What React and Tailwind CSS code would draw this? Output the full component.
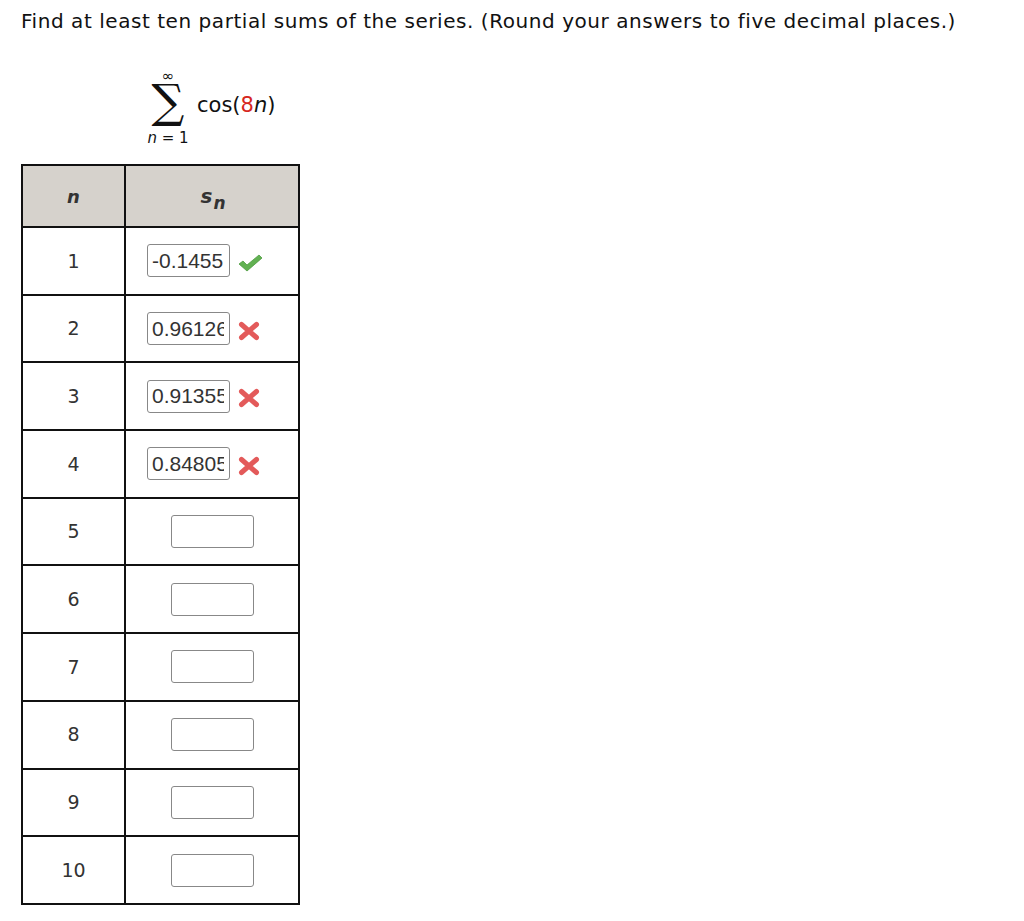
import React from "react";

const rows = [
  { n: 1, v: "-0.1455", s: "ok" },
  { n: 2, v: "0.96126", s: "bad" },
  { n: 3, v: "0.91355", s: "bad" },
  { n: 4, v: "0.84805", s: "bad" },
  { n: 5 },
  { n: 6 },
  { n: 7 },
  { n: 8 },
  { n: 9 },
  { n: 10 },
];

function Check() {
  return (
    <svg width="26" height="20" viewBox="0 0 26 20">
      <path d="M2 11 L6 8 L10 12 L22 2 L25 5 L10 18 Z" fill="#62b152" stroke="#4e9c40" strokeWidth="0.8" strokeLinejoin="round" />
    </svg>
  );
}

function Cross() {
  return (
    <svg width="24" height="22" viewBox="0 0 24 22">
      <path d="M4.5 4.5 L19.5 17.5 M19.5 4.5 L4.5 17.5" stroke="#e35a5a" strokeWidth="5" strokeLinecap="round" />
    </svg>
  );
}

export default function App() {
  return (
    <div className="bg-white min-h-[921px] w-[1024px] pl-[21px] pt-[9px] text-black" style={{ fontFamily: "'DejaVu Sans', Verdana, sans-serif" }}>
      <p className="text-[20px] leading-[24px] tracking-[0.55px] text-[#111] whitespace-nowrap">
        Find at least ten partial sums of the series. (Round your answers to five decimal places.)
      </p>
      <div className="ml-[124px] mt-[36px] flex items-center">
        <div className="flex flex-col items-center w-[46px] text-[#111]">
          <span className="text-[15px] leading-[14px] h-[14px]">∞</span>
          <span className="text-[46px] leading-[42px] h-[42px] relative top-[-3px] flex items-center" style={{ fontFamily: "'DejaVu Serif', serif" }}>∑</span>
          <span className="text-[15px] leading-[18px] h-[18px] whitespace-nowrap mt-[4px]"><i>n</i>{"\u00a0=\u00a01"}</span>
        </div>
        <span className="text-[21px] ml-[6px] mt-[-4px] text-[#111]">
          cos(<span className="text-[#d6261d]">8</span><i>n</i>)
        </span>
      </div>
      <table className="mt-[17px] border-collapse border-2 border-[#111]">
        <thead>
          <tr className="bg-[#d6d2cc] h-[62px]">
            <th className="w-[103px] border-2 border-[#111] font-bold italic text-[18px] text-[#333]">n</th>
            <th className="w-[174px] border-2 border-[#111] font-bold italic text-[20px] text-[#333] pl-[2px]">
              s<span className="text-[17px] relative top-[6px] ml-[1px]">n</span>
            </th>
          </tr>
        </thead>
        <tbody>
          {rows.map((r) => (
            <tr key={r.n} className="h-[67.7px]">
              <td className="border-2 border-[#111] text-center text-[19px] text-[#333]">{r.n}</td>
              <td className="border-2 border-[#111]">
                {r.v ? (
                  <div className="flex items-center pl-[21px]">
                    <input
                      readOnly
                      value={r.v}
                      className="w-[83px] h-[33px] border border-[#888] rounded-[3px] pl-[4px] pr-[5px] text-[21px] text-[#333] bg-white outline-none"
                      style={{ fontFamily: "'Liberation Sans', Arial, sans-serif" }}
                    />
                    <div className="ml-[7px] mt-[4px] flex items-center">{r.s === "ok" ? <Check /> : <Cross />}</div>
                  </div>
                ) : (
                  <div className="flex justify-center">
                    <div className="w-[83px] h-[33px] border border-[#888] rounded-[3px]" />
                  </div>
                )}
              </td>
            </tr>
          ))}
        </tbody>
      </table>
    </div>
  );
}
